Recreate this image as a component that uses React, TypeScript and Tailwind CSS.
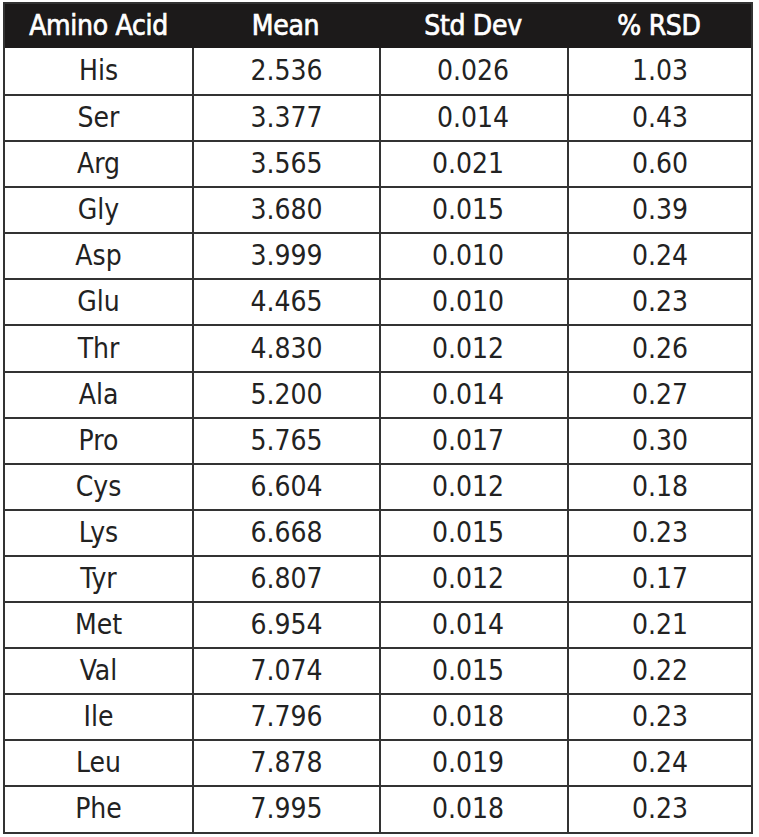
import React from 'react';

type Row = { acid: string; mean: string; sd: string; rsd: string; sdShift?: boolean };

const rows: Row[] = [
  { acid: 'His', mean: '2.536', sd: '0.026', rsd: '1.03', sdShift: true },
  { acid: 'Ser', mean: '3.377', sd: '0.014', rsd: '0.43', sdShift: true },
  { acid: 'Arg', mean: '3.565', sd: '0.021', rsd: '0.60' },
  { acid: 'Gly', mean: '3.680', sd: '0.015', rsd: '0.39' },
  { acid: 'Asp', mean: '3.999', sd: '0.010', rsd: '0.24' },
  { acid: 'Glu', mean: '4.465', sd: '0.010', rsd: '0.23' },
  { acid: 'Thr', mean: '4.830', sd: '0.012', rsd: '0.26' },
  { acid: 'Ala', mean: '5.200', sd: '0.014', rsd: '0.27' },
  { acid: 'Pro', mean: '5.765', sd: '0.017', rsd: '0.30' },
  { acid: 'Cys', mean: '6.604', sd: '0.012', rsd: '0.18' },
  { acid: 'Lys', mean: '6.668', sd: '0.015', rsd: '0.23' },
  { acid: 'Tyr', mean: '6.807', sd: '0.012', rsd: '0.17' },
  { acid: 'Met', mean: '6.954', sd: '0.014', rsd: '0.21' },
  { acid: 'Val', mean: '7.074', sd: '0.015', rsd: '0.22' },
  { acid: 'Ile', mean: '7.796', sd: '0.018', rsd: '0.23' },
  { acid: 'Leu', mean: '7.878', sd: '0.019', rsd: '0.24' },
  { acid: 'Phe', mean: '7.995', sd: '0.018', rsd: '0.23' },
];

const cols = 'grid grid-cols-[187px_187px_188px_184px]';

const App: React.FC = () => {
  return (
    <div className="min-h-screen bg-white pt-[2px] pl-[3px]">
      <div
        className="w-[750px] border-2 border-[#333] text-[28px] text-[#222]"
        style={{ fontFamily: '"DejaVu Sans Condensed", "DejaVu Sans", sans-serif' }}
      >
        {/* header */}
        <div
          className={`${cols} h-[44px] bg-[#1c1a1a] text-[28px] tracking-[-0.3px] text-white [-webkit-text-stroke:0.7px_white]`}
        >
          <div className="flex items-center justify-center">Amino Acid</div>
          <div className="flex items-center justify-center">Mean</div>
          <div className="flex items-center justify-center">Std Dev</div>
          <div className="flex items-center justify-center">% RSD</div>
        </div>

        {rows.map((r, i) => (
          <div
            key={r.acid}
            className={`${cols} ${i === 0 ? 'h-[46px]' : 'h-[46.1px] border-t-2 border-[#333]'}`}
          >
            <div className="flex items-center justify-center">{r.acid}</div>
            <div className="flex items-center justify-center border-l-2 border-[#333]">{r.mean}</div>
            <div
              className={`flex items-center border-l-2 border-[#333] ${r.sdShift ? 'pl-[56px]' : 'pl-[51px]'}`}
            >
              {r.sd}
            </div>
            <div className="flex items-center justify-center border-l-2 border-[#333]">{r.rsd}</div>
          </div>
        ))}
      </div>
    </div>
  );
};

export default App;
